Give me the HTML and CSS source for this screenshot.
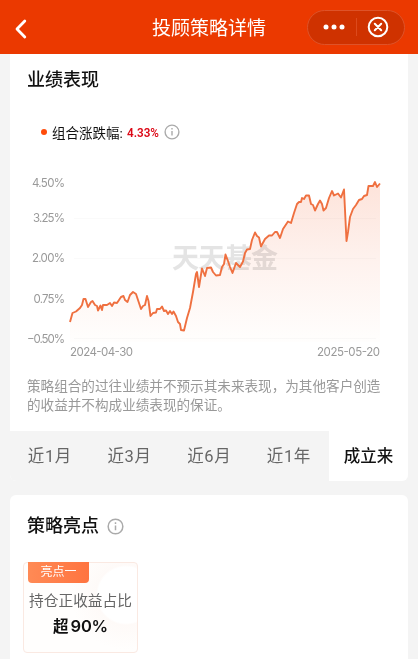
FILE: index.html
```
<!DOCTYPE html>
<html lang="zh-CN">
<head>
  <meta charset="UTF-8" />
  <meta name="viewport" content="width=device-width, initial-scale=1.0"/>
  <title>投顾策略详情</title>
  <link rel="stylesheet" href="styles.css">
</head>
<body>
  <header class="navbar">
    <svg class="back" width="12" height="20" viewBox="0 0 12 20"><path d="M9.8 2 2 10l7.8 8" /></svg>
    <h1>投顾策略详情</h1>
    <div class="capsule">
      <svg width="22" height="6" viewBox="0 0 22 6"><circle cx="3" cy="3" r="2.5" /><circle cx="11" cy="3" r="2.5" /><circle cx="19" cy="3" r="2.5" /></svg>
      <span class="divider"></span>
      <svg class="close" width="22" height="22" viewBox="0 0 22 22"><circle cx="11" cy="11" r="9.3" /><path d="m7.8 7.8 6.4 6.4M14.2 7.8l-6.4 6.4" /></svg>
    </div>
  </header>

  <section class="card performance">
    <h2>业绩表现</h2>
    <div class="legend">
      <span class="dot"></span>
      <span class="legend-name">组合涨跌幅:</span>
      <svg class="rise" width="37" height="16"><text x="0" y="12.5" textLength="32" lengthAdjust="spacingAndGlyphs">4.33%</text></svg>
      <svg class="info" width="16" height="16" viewBox="0 0 16 16"><circle cx="8" cy="8" r="6.9" /><path d="M8 7v4.6M8 4.1v1.5" /></svg>
    </div>

    <svg class="chart" width="398" height="195" viewBox="10 165 398 195">
      <defs>
        <linearGradient id="fade" x1="0" y1="182" x2="0" y2="342" gradientUnits="userSpaceOnUse">
          <stop offset="0" stop-color="#fde3da" />
          <stop offset="0.5" stop-color="#fef2ee" />
          <stop offset="1" stop-color="#fffefd" />
        </linearGradient>
      </defs>
      <path class="grid" d="M74 218.5H376M74 258.5H376M74 338.5H376" />
      <text class="watermark" x="172" y="268" textLength="106">天天基金</text>
      <path class="area" d="M70 322L72.5 313 76 311.5 80 308 82 305 83.5 299 85.5 299 88 307 91 302 92.5 301 95 305 97 306 98 310.5 100.5 305.5 102 310 103 305 107 305 110 303 112 306 114 302.5 117 303 121 297 123.5 296 125 300 127.5 302 130 295 133 292 136 294 139 303 141 309 143 306 145 305 147 296 148.5 301 150.5 316 153 313 156 312.5 157 309 160 309 162 306.5 164 311 166 310.5 168 314 170 311 172 314 173.5 311.5 176 316 178 322 180 324 181 330 184 330.5 187 318 190 308 193 292 196 274 197 272 199 287 202 268.5 205 276 207 268 211 267.5 213 272 216 275.5 220 275 222 267 224 264 225.5 254.5 228 261 230 267 232.5 273 236 263 240 267 243 261.5 245 253 247 249.5 250 249 252 240 255 232.5 257 236 259 237.5 261 246.5 265 239 269 235.5 272 235.5 275 232 277 232 280 238 283 229 288 221.5 291 223 294 213 297 204 299 202 301 202 302 198 304 199 306 195.5 309 195.5 311 204 313 205 315 210.5 318 204 320 200.5 322 204 323.5 210.5 326 208 329 198 332 191 334 195.5 338 193.5 341 197.5 344 189.5 345 210 346.5 241 348 232 350 217 353 209 356 205 359 200 362 199 364 196 367 195 368.5 186 373 186 375 182 377 187 380 183.5V342H70Z" />
      <path class="line" d="M70 322L72.5 313 76 311.5 80 308 82 305 83.5 299 85.5 299 88 307 91 302 92.5 301 95 305 97 306 98 310.5 100.5 305.5 102 310 103 305 107 305 110 303 112 306 114 302.5 117 303 121 297 123.5 296 125 300 127.5 302 130 295 133 292 136 294 139 303 141 309 143 306 145 305 147 296 148.5 301 150.5 316 153 313 156 312.5 157 309 160 309 162 306.5 164 311 166 310.5 168 314 170 311 172 314 173.5 311.5 176 316 178 322 180 324 181 330 184 330.5 187 318 190 308 193 292 196 274 197 272 199 287 202 268.5 205 276 207 268 211 267.5 213 272 216 275.5 220 275 222 267 224 264 225.5 254.5 228 261 230 267 232.5 273 236 263 240 267 243 261.5 245 253 247 249.5 250 249 252 240 255 232.5 257 236 259 237.5 261 246.5 265 239 269 235.5 272 235.5 275 232 277 232 280 238 283 229 288 221.5 291 223 294 213 297 204 299 202 301 202 302 198 304 199 306 195.5 309 195.5 311 204 313 205 315 210.5 318 204 320 200.5 322 204 323.5 210.5 326 208 329 198 332 191 334 195.5 338 193.5 341 197.5 344 189.5 345 210 346.5 241 348 232 350 217 353 209 356 205 359 200 362 199 364 196 367 195 368.5 186 373 186 375 182 377 187 380 183.5" />
      <g class="axis">
        <text x="32" y="186.5" textLength="33">4.50%</text>
        <text x="33" y="221.5" textLength="32">3.25%</text>
        <text x="32" y="262" textLength="33">2.00%</text>
        <text x="33.5" y="302.5" textLength="31.5">0.75%</text>
        <text x="27" y="342.5" textLength="38">−0.50%</text>
        <text x="70" y="355.5" textLength="63">2024-04-30</text>
        <text x="317" y="355.5" textLength="63">2025-05-20</text>
      </g>
    </svg>

    <p class="notice">策略组合的过往业绩并不预示其未来表现，为其他客户创造的收益并不构成业绩表现的保证。</p>

    <nav class="tabs">
      <span>近1月</span>
      <span>近3月</span>
      <span>近6月</span>
      <span>近1年</span>
      <span class="active">成立来</span>
    </nav>
  </section>

  <section class="card highlights">
    <h2>策略亮点
      <svg class="info" width="17" height="17" viewBox="0 0 16 16"><circle cx="8" cy="8" r="6.9" /><path d="M8 7v4.6M8 4.1v1.5" /></svg>
    </h2>
    <div class="highlight">
      <span class="tag">亮点一</span>
      <span class="label">持仓正收益占比</span>
      <strong>超<b>90%</b></strong>
    </div>
  </section>
</body>
</html>
```
FILE: styles.css
```
* {
  box-sizing: border-box;
}

body {
  margin: 0;
  height: 659px;
  background: #f4f4f4;
  font-family: Roboto, "Noto Sans CJK SC", sans-serif;
  color: #111;
  overflow: hidden;
}

h1, h2, p {
  margin: 0;
}

.navbar {
  display: grid;
  grid-template-columns: 1fr auto 1fr;
  align-items: center;
  height: 54px;
  padding: 0 13px;
  background: #eb3900;
  color: white;
}

.navbar h1 {
  padding-top: 4px;
  font-size: 19px;
  line-height: 28px;
  font-weight: 400;
}

.back {
  margin: 4px 0 0 2px;
  fill: none;
  stroke: white;
  stroke-width: 2.8;
  stroke-linecap: round;
  stroke-linejoin: round;
}

.capsule {
  display: flex;
  justify-content: space-between;
  align-items: center;
  justify-self: end;
  width: 98px;
  height: 35px;
  padding: 0 15px;
  border: 1px solid #de5329;
  border-radius: 18px;
  background: #cf3200;
  fill: white;
}

.divider {
  width: 1px;
  height: 18px;
  background: #dc4a1d;
}

.capsule .close {
  fill: none;
  stroke: white;
  stroke-width: 2;
  stroke-linecap: round;
}

.card {
  margin: 0 8px 0 10px;
  width: 398px;
  background: white;
}

.card h2 {
  display: flex;
  align-items: center;
  gap: 8px;
  font-size: 18px;
  line-height: 26px;
  font-weight: 500;
}

.performance {
  border-radius: 0 0 6px 6px;
  overflow: hidden;
}

.performance h2 {
  padding: 13px 17px 0;
}

.legend {
  display: flex;
  align-items: center;
  height: 20px;
  margin-top: 29px;
  padding-left: 31px;
  font-size: 13.5px;
}

.dot {
  width: 6px;
  height: 6px;
  margin-right: 5px;
  border-radius: 50%;
  background: #ff4b0a;
}

.legend-name {
  width: 75px;
  white-space: nowrap;
}

.rise {
  fill: #dc0816;
  font-size: 13px;
  font-weight: 600;
}

.info {
  fill: none;
  stroke: #aaa;
  stroke-width: 1.4;
}

.chart {
  display: block;
  margin-top: 23px;
}

.grid {
  stroke: #fafafa;
}

.area {
  fill: url(#fade);
  mix-blend-mode: multiply;
}

.line {
  fill: none;
  stroke: #ef7040;
  stroke-width: 1.9;
  stroke-linejoin: round;
}

.watermark {
  fill: #e4e4e4;
  font-size: 27px;
  font-weight: 700;
}

.axis {
  fill: #999;
  font-family: Inter, sans-serif;
  font-size: 11.5px;
}

.notice {
  padding: 17px 17px 0;
  color: #999;
  font-size: 13.6px;
  line-height: 19px;
}

.tabs {
  display: grid;
  grid-template-columns: repeat(4, 79.7px) 1fr;
  height: 50px;
  margin-top: 16px;
  background: #f4f4f4;
  color: #666;
  font-size: 16.5px;
  line-height: 51px;
  text-align: center;
}

.tabs span:not(.active) {
  letter-spacing: 0.6px;
}

.tabs .active {
  background: white;
  color: #111;
  font-weight: 500;
}

.highlights {
  height: 180px;
  margin-top: 14px;
  padding: 18px 13px;
  border-radius: 6px;
}

.highlights h2 {
  padding-left: 4px;
}

.highlight {
  display: flex;
  flex-direction: column;
  align-items: center;
  width: 115px;
  height: 91px;
  margin-top: 23px;
  border: 1px solid #fae9e2;
  border-radius: 4px;
  background: radial-gradient(circle at 102px 32px, #fff 28px, #fefaf8 30px, #fffefd 55px);
}

.tag {
  align-self: flex-start;
  width: 61px;
  height: 21px;
  margin: -1px 0 0 4px;
  border-radius: 0 0 4px 4px;
  background: linear-gradient(90deg, #ff8a55, #ff7440);
  color: white;
  font-size: 12px;
  line-height: 21px;
  text-align: center;
}

.label {
  margin-top: 7px;
  color: #666;
  font-size: 14.7px;
  line-height: 22px;
  white-space: nowrap;
}

.highlight strong {
  margin-top: 2px;
  font-size: 15.5px;
  line-height: 24px;
  font-weight: 700;
}

.highlight b {
  margin-left: 2px;
  font-family: Inter, sans-serif;
  font-size: 16.5px;
  font-weight: 600;
  letter-spacing: -0.2px;
}
```
